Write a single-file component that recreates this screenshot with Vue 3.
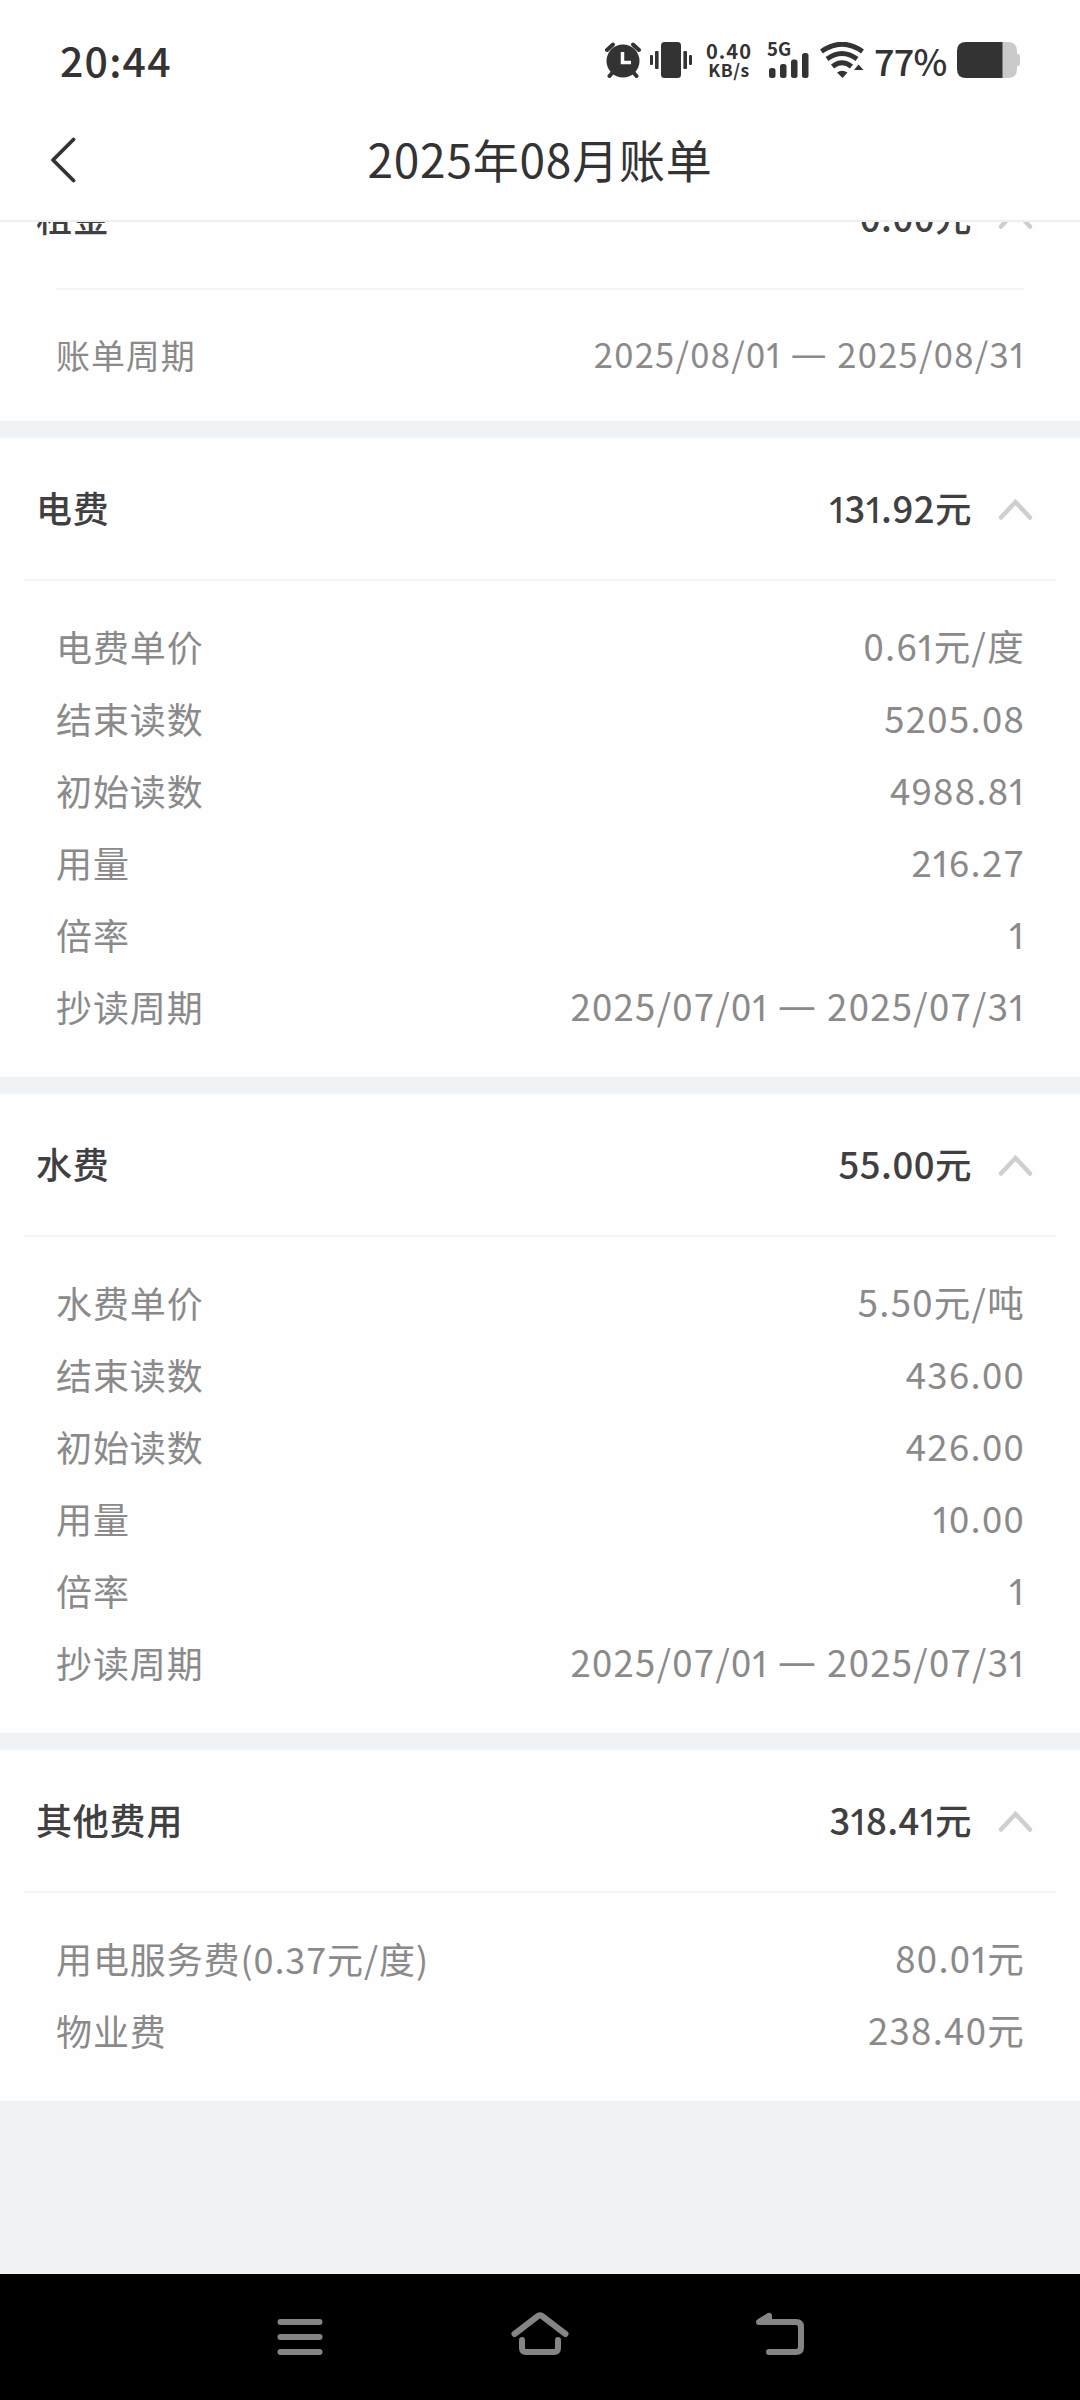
<script setup>
import { ref } from 'vue';

// Secciones de la factura
const sections = ref([
  {
    title: '租金',
    amount: '0.00元',
    compact: true,
    rows: [{ label: '账单周期', value: '2025/08/01 — 2025/08/31' }]
  },
  {
    title: '电费',
    amount: '131.92元',
    rows: [
      { label: '电费单价', value: '0.61元/度' },
      { label: '结束读数', value: '5205.08' },
      { label: '初始读数', value: '4988.81' },
      { label: '用量', value: '216.27' },
      { label: '倍率', value: '1' },
      { label: '抄读周期', value: '2025/07/01 — 2025/07/31' }
    ]
  },
  {
    title: '水费',
    amount: '55.00元',
    rows: [
      { label: '水费单价', value: '5.50元/吨' },
      { label: '结束读数', value: '436.00' },
      { label: '初始读数', value: '426.00' },
      { label: '用量', value: '10.00' },
      { label: '倍率', value: '1' },
      { label: '抄读周期', value: '2025/07/01 — 2025/07/31' }
    ]
  },
  {
    title: '其他费用',
    amount: '318.41元',
    rows: [
      { label: '用电服务费(0.37元/度)', value: '80.01元' },
      { label: '物业费', value: '238.40元' }
    ]
  }
]);

// Separa los unos (cifra sin pie) y la raya de los periodos
const parts = (text) => text.split(/(1|—)/).filter((part) => part);
</script>

<template>
  <div class="screen">
    <!-- Barra de estado -->
    <div class="status">
      <span class="time">20:44</span>
      <div class="status-icons">
        <svg class="alarm" width="36" height="36" viewBox="0 0 36 36">
          <path d="M2 8 8 2.5M34 8 28 2.5M8 30 4.500 34M28 30 31.500 34" stroke="#333" stroke-width="4" stroke-linecap="round" />
          <circle cx="18" cy="19" r="16.500" fill="#333" />
          <path d="M17.500 10v10.500H26" fill="none" stroke="#fefefe" stroke-width="3.500" />
        </svg>
        <svg class="vibrate" width="42" height="36" viewBox="0 0 42 36" fill="#333">
          <rect x="11" y="0" width="20" height="36" rx="3.500" />
          <rect x="5" y="9" width="3.600" height="18" rx="1" />
          <rect x="33.400" y="9" width="3.600" height="18" rx="1" />
          <rect x="0" y="13" width="3" height="10" rx="1" />
          <rect x="39" y="13" width="3" height="10" rx="1" />
        </svg>
        <div class="speed">
          <span class="speed-num">0.40</span>
          <span class="speed-unit">KB/s</span>
        </div>
        <div class="signal">
          <span class="net">5G</span>
          <svg width="40" height="25" viewBox="0 0 40 25" fill="#333">
            <rect x="0" y="15" width="6.500" height="10" rx="2.500" />
            <rect x="11" y="11" width="6.500" height="14" rx="2.500" />
            <rect x="22" y="6.500" width="6.500" height="18.500" rx="2.500" />
            <rect x="33" y="0" width="6.500" height="25" rx="2.500" />
          </svg>
        </div>
        <svg class="wifi" width="44" height="36" viewBox="0 0 44 36">
          <g fill="none" stroke="#333" stroke-width="5">
            <path d="M1.500 9.500Q22-5 42.500 9.500" />
            <path d="M7 17Q22 6 37 17" />
            <path d="M12.500 24.500Q22 17 31.500 24.500" />
          </g>
          <path d="M17 30.500Q22 27 27.500 30.500L22.500 36Z" fill="#333" />
          <path d="M34 28 38.500 22.500 43.500 28Z" fill="#333" />
        </svg>
        <span class="percent">77%</span>
        <svg class="battery" width="63" height="36" viewBox="0 0 63 36">
          <path d="M45 0H51Q60 0 60 9V12H61Q63 12 63 14V22Q63 24 61 24H60V27Q60 36 51 36H45Z" fill="#cacaca" />
          <path d="M45.500 0H9Q0 0 0 9V27Q0 36 9 36H45.500Z" fill="#333" />
        </svg>
      </div>
    </div>

    <!-- Cabecera -->
    <header class="navbar">
      <svg class="back" width="28" height="46" viewBox="0 0 28 46">
        <path d="M23.500 2.500 3 23 23.500 43.500" fill="none" stroke="#333" stroke-width="3.800" stroke-linecap="round" stroke-linejoin="round" />
      </svg>
      <h1>2025年08月账单</h1>
    </header>

    <!-- Contenido desplazado -->
    <main class="content">
      <div class="list">
        <section v-for="section in sections" :key="section.title" class="section" :class="{ compact: section.compact }">
          <div class="head">
            <span class="title">{{ section.title }}</span>
            <span class="amount"><span v-for="(part, i) in parts(section.amount)" :key="i" :class="{ one: part === '1' }">{{ part }}</span></span>
            <svg class="arrow" width="36" height="24" viewBox="0 0 36 24">
              <path d="M3 20.500 17.500 5 32 20.500" fill="none" stroke="#cfcfcf" stroke-width="4.500" stroke-linecap="round" />
            </svg>
          </div>
          <div class="line"></div>
          <div class="rows">
            <div v-for="row in section.rows" :key="row.label" class="row">
              <span class="label">{{ row.label }}</span>
              <span class="value"><span v-for="(part, i) in parts(row.value)" :key="i" :class="{ one: part === '1', dash: part === '—' }">{{ part }}</span></span>
            </div>
          </div>
        </section>
      </div>
    </main>

    <!-- Botones del sistema -->
    <nav class="system">
      <svg width="60" height="48" viewBox="0 0 60 48">
        <path d="M10.500 10H49.500M10.500 25H49.500M10.500 40H49.500" />
      </svg>
      <svg width="60" height="48" viewBox="0 0 60 48">
        <path d="M4.500 22 28 4Q30 2.500 32 4L55.500 22M12 28V36Q12 40 16 40H44Q48 40 48 36V28" />
      </svg>
      <svg width="60" height="48" viewBox="0 0 60 48">
        <path d="M19 40H46Q51 40 51 35V15Q51 10 46 10H9L19 4" />
        <path d="M10 9.500 19 4V10Z" />
      </svg>
    </nav>
  </div>
</template>

<style>
body {
  background-color: #f0f3f6;
}
</style>

<style scoped>
.screen {
  width: 1080px;
  height: 2400px;
  display: flex;
  flex-direction: column;
  overflow: hidden;
  background-color: #f0f3f6;
  color: #333;
  font-family: "Noto Sans CJK SC", sans-serif;
}

.status {
  height: 100px;
  padding: 20px 60px 0;
  display: flex;
  justify-content: space-between;
  align-items: center;
  box-sizing: border-box;
  background-color: #fefefe;
}

.time {
  margin-bottom: 2px;
  font-size: 41px;
  font-weight: 500;
  line-height: 60px;
  letter-spacing: 1.2px;
}

.status-icons {
  display: flex;
  align-items: center;
  height: 36px;
}

.vibrate {
  margin-left: 9px;
}

.speed {
  width: 48px;
  margin-left: 13px;
  display: flex;
  flex-direction: column;
  align-items: center;
  font-weight: 700;
  white-space: nowrap;
}

.speed-num {
  font-size: 20px;
  line-height: 19px;
  letter-spacing: 1px;
}

.speed-unit {
  font-size: 17.5px;
  line-height: 19px;
  letter-spacing: 0.5px;
}

.signal {
  position: relative;
  width: 40px;
  height: 36px;
  margin-left: 16px;
  display: flex;
  align-items: flex-end;
}

.net {
  position: absolute; /* Va encima de las barras */
  left: -2px;
  top: -5px;
  font-size: 18.5px;
  font-weight: 700;
  line-height: 22px;
}

.wifi {
  margin-left: 11px;
}

.percent {
  width: 74px;
  margin-left: 10px;
  margin-bottom: 1px;
  font-size: 36px;
  font-weight: 500;
  line-height: 36px;
  letter-spacing: -0.8px;
  white-space: nowrap;
}

.battery {
  margin-left: 9px;
}

.navbar {
  height: 122px;
  display: flex;
  align-items: center;
  box-sizing: border-box;
  border-bottom: 2px solid #efefef;
  background-color: #fefefe;
}

.back {
  margin-left: 50px;
}

h1 {
  flex: 1;
  margin: 0 78px 4px 0;
  text-align: center;
  font-size: 46px;
  font-weight: 400;
  line-height: 60px;
  letter-spacing: 0.8px;
}

.content {
  height: 2052px;
  overflow: hidden;
}

.list {
  margin-top: -75px; /* Desplazamiento de la lista */
  display: flex;
  flex-direction: column;
  gap: 17px;
}

.section {
  background-color: #fefefe;
}

.head {
  height: 141px;
  padding: 0 46px 0 36px;
  display: flex;
  align-items: center;
}

.title {
  flex: 1;
  margin-bottom: 3px;
  font-size: 36px;
  font-weight: 500;
  letter-spacing: 0.8px;
  color: #404040;
}

.amount {
  margin-bottom: 3px;
  font-size: 36.5px;
  font-weight: 500;
  letter-spacing: 0.5px;
  color: #404040;
}

.arrow {
  margin-left: 26px;
}

.line {
  height: 2px;
  margin: 0 24px;
  background-color: #f5f5f5;
}

.rows {
  padding: 29px 56px 35px;
}

.row {
  height: 72px;
  display: flex;
  justify-content: space-between;
  align-items: center;
  font-size: 36px;
  color: #8a8a8a;
}

.label {
  letter-spacing: 0.9px;
}

.value {
  margin-right: -1px;
  font-size: 36.5px;
  line-height: 54px;
  letter-spacing: 1.3px;
}

.one {
  font-family: Lato, sans-serif;
  font-variant-numeric: proportional-nums;
}

.dash {
  font-size: 1.18em;
  line-height: 1;
}

.compact .line {
  margin: 0 56px;
}

.compact .rows {
  padding: 28px 56px 31px;
}

.compact .row {
  font-size: 34px;
}

.compact .value {
  font-size: 34.5px;
}

.system {
  height: 126px;
  padding: 0 180px 2px;
  display: flex;
  justify-content: space-around;
  align-items: center;
  box-sizing: border-box;
  background-color: #000;
}

.system svg {
  fill: none;
  stroke: #858585;
  stroke-width: 6;
  stroke-linecap: round;
  stroke-linejoin: round;
}
</style>
